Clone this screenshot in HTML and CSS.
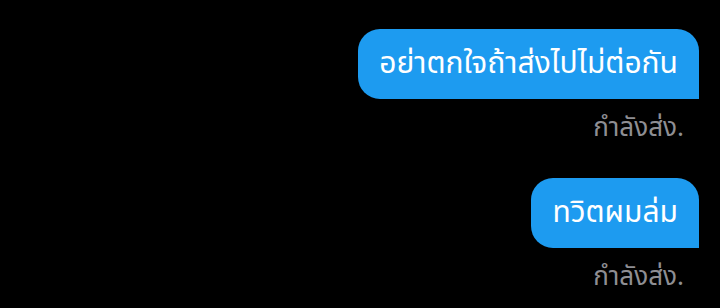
FILE: index.html
```html
<!DOCTYPE html>
<html lang="th">
<head>
  <meta charset="UTF-8" />
  <meta name="viewport" content="width=device-width, initial-scale=1" />
  <title>ข้อความ</title>
  <link rel="stylesheet" href="styles.css">
</head>
<body>
  <div class="thread">
    <div class="msg">
      <div class="bubble">อย่าตกใจถ้าส่งไปไม่ต่อกัน</div>
      <div class="status">กำลังส่ง.</div>
    </div>
    <div class="msg">
      <div class="bubble">ทวิตผมล่ม</div>
      <div class="status">กำลังส่ง.</div>
    </div>
  </div>
</body>
</html>
```

FILE: styles.css
```css
body {
  margin: 0;
  background-color: #000;
  font-family: "Noto Sans Thai", "Noto Sans", sans-serif;
}

.thread {
  display: flex;
  flex-direction: column;
  align-items: flex-end;
  gap: 33px;
  padding: 29px 21px 0 0;
}

.msg {
  display: flex;
  flex-direction: column;
  align-items: flex-end;
}

.bubble {
  background-color: #1d9bf0;
  color: #fff;
  font-size: 30px;
  line-height: 70px;
  height: 70px;
  padding: 0 21px;
  border-radius: 22px 22px 0 22px;
}

.status {
  color: #8e8e93;
  font-size: 26px;
  line-height: 34px;
  margin-top: 12px;
  margin-right: 15px;
}
```
